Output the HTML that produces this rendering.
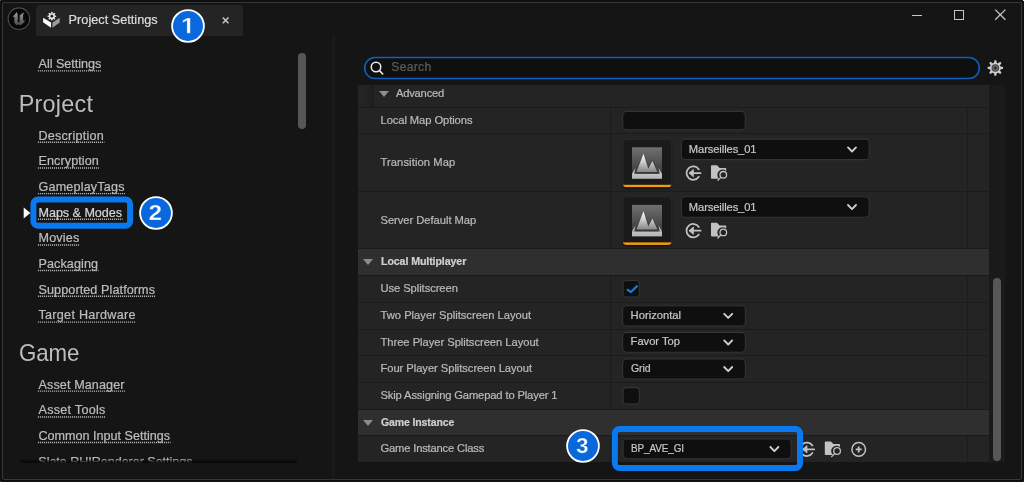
<!DOCTYPE html>
<html>
<head>
<meta charset="utf-8">
<title>Project Settings</title>
<style>
*{box-sizing:border-box;margin:0;padding:0}
html,body{width:1024px;height:482px;overflow:hidden;background:#101010;font-family:"Liberation Sans",sans-serif}
body{position:relative}
.a{position:absolute}
#win{position:absolute;left:2px;top:2px;width:1020px;height:478px;border:1px solid #363636;border-radius:2px;background:#151515}
.px{position:absolute;width:1px;height:1px}
.tx{position:absolute;white-space:nowrap;display:block;-webkit-text-stroke:0.22px currentColor}
.ul{position:absolute;height:1px;background-image:linear-gradient(90deg,#b4b4b4 50%,rgba(180,180,180,.25) 50%);background-size:2px 1px}
#txl{position:absolute;left:0;top:0;width:1024px;height:482px;will-change:transform}
#tab{position:absolute;left:36px;top:5px;width:207px;height:31px;background:#242424;border-radius:4px 4px 0 0}
.hl{position:absolute;border:6px solid #0a78ee;border-radius:8px}
.row{position:absolute;left:358px;width:631px;background:#242424}
.row.h{background:#2f2f2f}
.sep{position:absolute;left:358px;width:631px;height:1px;background:#1b1b1b}
.vl{position:absolute;width:1px;background:#1c1c1c}
.inp{position:absolute;background:#0f0f0f;border:1px solid #323232;border-radius:4px}
.thumb{position:absolute;width:49px;height:49px;background:#1a1a1a;border:1px solid #272727;border-radius:4px;box-shadow:0 1px 2px rgba(0,0,0,.55);overflow:hidden}
.thumb i{position:absolute;left:0;bottom:0;width:49px;height:2.5px;background:#f49a0c}
.tri{position:absolute;width:0;height:0;border-left:5px solid transparent;border-right:5px solid transparent;border-top:6.5px solid #8c8c8c}
</style>
</head>
<body>
<div id="win"></div>
<div class="px" style="left:0;top:0;background:#5a5a5a"></div>
<div class="px" style="left:1023px;top:0;background:#e4e4e4"></div>
<div class="px" style="left:0;top:481px;background:#4a4a4a"></div>
<div class="px" style="left:1023px;top:481px;background:#4a4030"></div>

<!-- UE logo -->
<svg class="a" style="left:7px;top:7px" width="24" height="24" viewBox="0 0 24 24">
  <defs>
  <radialGradient id="lg" cx="50%" cy="45%" r="55%"><stop offset="0" stop-color="#0e0e0e"/><stop offset="1" stop-color="#030303"/></radialGradient>
  <linearGradient id="ug" x1="0" y1="0" x2="0" y2="1"><stop offset="0" stop-color="#9c9c9c"/><stop offset="1" stop-color="#4a4a4a"/></linearGradient>
  </defs>
  <circle cx="11.9" cy="11.7" r="10.8" fill="url(#lg)" stroke="#4a4a4a" stroke-width="1.1"/>
  <path transform="translate(0.1 -0.5)" d="M5.1 10.5 C6.6 9.3 8.2 7.3 9.5 5.4 C10 6.4 10.6 7 10.6 8.4 L10.6 15.4 C11 16 12 16 12.6 15.4 L12.6 9.2 C13.4 7.6 15.4 6.4 17.4 5.9 C16.4 7 16 7.8 16 8.8 L16 13.8 C16.6 14.4 17.2 14.4 18 14 C17.4 16 15 18 13 18.7 C12.4 18.2 12 18 11.4 18 C10.6 18 10 18.2 9.2 18.7 C8.4 17.8 7.3 16.8 7.3 15.6 L7.3 11 C7.3 10.2 6.4 10.1 5.1 10.5 Z" fill="url(#ug)"/>
</svg>

<div id="tab"></div>
<!-- tab icon -->
<svg class="a" style="left:43px;top:10px" width="18" height="19" viewBox="0 -2 18 19">
  <path d="M0.1 5.7 L8.05 10.4 L8.05 15.8 L0.1 10.3 Z" fill="#ffffff"/>
  <path d="M9.45 10.4 L16.7 5.7 L16.7 10.4 L9.45 15.8 Z" fill="#9c9c9c"/>
  <circle cx="8.85" cy="4.2" r="5.3" fill="#242424"/>
  <g transform="translate(8.85 4.2)"><g fill="#e4e4e4"><path d="M-1.05 -2.6 L-0.55 -4.4 L0.55 -4.4 L1.05 -2.6 Z" transform="rotate(0)"/><path d="M-1.05 -2.6 L-0.55 -4.4 L0.55 -4.4 L1.05 -2.6 Z" transform="rotate(45)"/><path d="M-1.05 -2.6 L-0.55 -4.4 L0.55 -4.4 L1.05 -2.6 Z" transform="rotate(90)"/><path d="M-1.05 -2.6 L-0.55 -4.4 L0.55 -4.4 L1.05 -2.6 Z" transform="rotate(135)"/><path d="M-1.05 -2.6 L-0.55 -4.4 L0.55 -4.4 L1.05 -2.6 Z" transform="rotate(180)"/><path d="M-1.05 -2.6 L-0.55 -4.4 L0.55 -4.4 L1.05 -2.6 Z" transform="rotate(225)"/><path d="M-1.05 -2.6 L-0.55 -4.4 L0.55 -4.4 L1.05 -2.6 Z" transform="rotate(270)"/><path d="M-1.05 -2.6 L-0.55 -4.4 L0.55 -4.4 L1.05 -2.6 Z" transform="rotate(315)"/><circle r="3"/></g><circle r="1.35" fill="#1a1a1a"/></g>
</svg>
<!-- tab close -->
<svg class="a" style="left:221px;top:16px" width="10" height="10" viewBox="0 0 10 10"><path d="M1.8 1.5 L7.5 7.2 M7.5 1.5 L1.8 7.2" stroke="#c4c4c4" stroke-width="1.6" fill="none"/></svg>
<svg class="a" style="left:170.1px;top:7.9px" width="36" height="36" viewBox="0 0 36 36"><title>1</title><circle cx="18" cy="18" r="15.9" fill="#0968dc" stroke="#ffffff" stroke-width="1.8"/><path transform="translate(11.10 25.20) scale(0.01212 -0.01079)" d="M478 0V1170L140 959V1180L493 1409H759V0Z" fill="#ffffff" stroke="#0968dc" stroke-width="30"/></svg>

<!-- window controls -->
<svg class="a" style="left:905px;top:4px" width="110" height="24" viewBox="0 0 110 24">
  <path d="M7 11.5 H17" stroke="#c6c6c6" stroke-width="1" fill="none"/>
  <rect x="49.5" y="6.5" width="9" height="9" stroke="#c6c6c6" stroke-width="1" fill="none"/>
  <path d="M90.2 5.6 L100.4 15.8 M100.4 5.6 L90.2 15.8" stroke="#c6c6c6" stroke-width="1.3" fill="none"/>
</svg>

<!-- left panel -->
<div class="a" style="left:298px;top:53px;width:8px;height:76px;border-radius:4px;background:#575757"></div>
<div class="a" style="left:332px;top:36px;width:3px;height:443px;background:#1a1a1a"></div>

<!-- clipped last nav item -->
<div class="a" style="left:20px;top:450px;width:277px;height:12.5px;overflow:hidden;will-change:transform">
  <span class="a" style="left:18.3px;top:4px;font-size:12.6px;line-height:16px;color:#bdbdbd;white-space:nowrap;letter-spacing:-0.05px;-webkit-text-stroke:0.22px currentColor" id="clipnav">Slate RHIRenderer Settings</span>
  <div class="a" style="left:0;top:8.5px;width:277px;height:4px;background:linear-gradient(rgba(8,8,8,0),rgba(8,8,8,.6) 50%,rgba(8,8,8,.97))"></div>
</div>

<svg class="a" style="left:23px;top:207px" width="8" height="12" viewBox="0 0 8 12"><path d="M0.7 0.6 L7.4 6 L0.7 11.4 Z" fill="#ffffff"/></svg>
<svg class="a" style="left:26px;top:192px" width="112" height="42" viewBox="26 192 112 42"><rect x="33.4" y="199.5" width="96.7" height="26.3" rx="4.6" fill="none" stroke="#0a78ee" stroke-width="6"/></svg>
<svg class="a" style="left:138.4px;top:195.0px" width="36" height="36" viewBox="0 0 36 36"><title>2</title><circle cx="18" cy="18" r="15.9" fill="#0968dc" stroke="#ffffff" stroke-width="1.8"/><path transform="translate(10.56 25.00) scale(0.01187 -0.01049)" d="M71 0V195Q126 316 228 431Q329 546 483 671Q631 791 690 869Q750 947 750 1022Q750 1206 565 1206Q475 1206 428 1158Q380 1109 366 1012L83 1028Q107 1224 230 1327Q352 1430 563 1430Q791 1430 913 1326Q1035 1222 1035 1034Q1035 935 996 855Q957 775 896 708Q835 640 760 581Q686 522 616 466Q546 410 488 353Q431 296 403 231H1057V0Z" fill="#ffffff" stroke="#0968dc" stroke-width="30"/></svg>

<!-- search -->
<svg class="a" style="left:360px;top:52px" width="626" height="32" viewBox="360 52 626 32"><rect x="364.7" y="57.45" width="614.6" height="21.1" rx="10.55" fill="#0f0f0f" stroke="#0d5fc0" stroke-width="1.6"/>
<circle cx="376" cy="67" r="4.75" stroke="#ececec" stroke-width="1.5" fill="none"/><path d="M379.5 70.6 L382.7 74" stroke="#ececec" stroke-width="1.6" stroke-linecap="round"/></svg>
<!-- gear -->
<svg class="a" style="left:985px;top:58px" width="20" height="20" viewBox="-10 -10 20 20">
  <g transform="translate(0.35 -0.05)">
  <g fill="#cdcdcd"><path d="M-1.7 -4.4 L-0.85 -7.75 L0.85 -7.75 L1.7 -4.4 Z" transform="rotate(0)"/><path d="M-1.7 -4.4 L-0.85 -7.75 L0.85 -7.75 L1.7 -4.4 Z" transform="rotate(45)"/><path d="M-1.7 -4.4 L-0.85 -7.75 L0.85 -7.75 L1.7 -4.4 Z" transform="rotate(90)"/><path d="M-1.7 -4.4 L-0.85 -7.75 L0.85 -7.75 L1.7 -4.4 Z" transform="rotate(135)"/><path d="M-1.7 -4.4 L-0.85 -7.75 L0.85 -7.75 L1.7 -4.4 Z" transform="rotate(180)"/><path d="M-1.7 -4.4 L-0.85 -7.75 L0.85 -7.75 L1.7 -4.4 Z" transform="rotate(225)"/><path d="M-1.7 -4.4 L-0.85 -7.75 L0.85 -7.75 L1.7 -4.4 Z" transform="rotate(270)"/><path d="M-1.7 -4.4 L-0.85 -7.75 L0.85 -7.75 L1.7 -4.4 Z" transform="rotate(315)"/><circle r="5.2"/></g>
  <circle r="3.8" fill="#3a3a3a"/>
  <circle r="2.3" fill="none" stroke="#6e6e6e" stroke-width="1.3"/>
  <circle r="0.9" fill="#1e1e1e"/>
  </g>
</svg>

<!-- scroll track -->
<div class="a" style="left:989px;top:85px;width:16px;height:377.5px;background:#1a1a1a"></div>
<div class="a" style="left:993px;top:278px;width:8px;height:183px;border-radius:4px;background:#575757"></div>

<!-- table -->
<div class="a" style="left:358px;top:85px;width:631px;height:377px;background:#1b1b1b"></div>
<div class="row" style="top:85px;height:22px;width:16px;background:linear-gradient(90deg,#242424 0,#242424 40%,#1d1d1d 100%)"></div>
<div class="row" style="top:85px;height:22px;left:374px;width:615px"></div>
<div class="row" style="top:108px;height:25px"></div>
<div class="row" style="top:134px;height:57px"></div>
<div class="row" style="top:192px;height:56px"></div>
<div class="row h" style="top:249px;height:26px"></div>
<div class="row" style="top:276px;height:26px"></div>
<div class="row" style="top:303px;height:26px"></div>
<div class="row" style="top:330px;height:25px"></div>
<div class="row" style="top:356px;height:26px"></div>
<div class="row" style="top:383px;height:26px"></div>
<div class="row h" style="top:410px;height:25px"></div>
<div class="row" style="top:436px;height:26px"></div>
<!-- column dividers -->
<div class="vl" style="left:609.5px;top:108px;height:140px"></div>
<div class="vl" style="left:967px;top:108px;height:140px"></div>
<div class="vl" style="left:609.5px;top:276px;height:133px"></div>
<div class="vl" style="left:967px;top:276px;height:133px"></div>
<div class="vl" style="left:609.5px;top:436px;height:26px"></div>
<div class="vl" style="left:967px;top:436px;height:26px"></div>

<div class="tri" style="left:379px;top:91.3px"></div>
<div class="tri" style="left:363px;top:259.3px"></div>
<div class="tri" style="left:363px;top:419.6px"></div>

<!-- input boxes -->
<svg class="a" style="left:0;top:0" width="1024" height="482" viewBox="0 0 1024 482"><g fill="#0f0f0f" stroke="#343434" stroke-width="1.1">
<rect x="622.75" y="111.45" width="122.50" height="18.30" rx="4.0"/>
<rect x="681.35" y="139.15" width="187.80" height="20.50" rx="4.0"/>
<rect x="681.35" y="196.75" width="187.80" height="20.50" rx="4.0"/>
<rect x="623.05" y="280.45" width="16.30" height="16.60" rx="3.5"/>
<rect x="623.05" y="387.65" width="16.30" height="16.40" rx="3.5"/>
<rect x="622.65" y="305.75" width="122.70" height="20.20" rx="4.0"/>
<rect x="622.65" y="332.35" width="122.70" height="19.90" rx="4.0"/>
<rect x="622.65" y="359.05" width="122.70" height="20.00" rx="4.0"/>
<rect x="623.05" y="439.05" width="168.10" height="19.70" rx="4.0"/>
</g></svg>

<!-- asset rows -->
<svg class="a" style="left:0;top:0;pointer-events:none" width="1024" height="482" viewBox="0 0 1024 482">
  <defs><clipPath id="tc"><rect x="0" y="0" width="48.9" height="48.5" rx="4"/></clipPath>
  <filter id="ts" x="-20%" y="-20%" width="140%" height="150%"><feGaussianBlur stdDeviation="1.1"/></filter>
  <g id="thumb"><rect x="0.5" y="1.6" width="47.9" height="48" rx="4" fill="#000" opacity="0.55" filter="url(#ts)"/><rect x="0" y="0" width="48.9" height="48.5" rx="4" fill="#2b2b2b"/><rect x="0.9" y="0.9" width="47.1" height="46.7" rx="3.2" fill="#1a1a1a"/><rect x="0" y="46" width="48.9" height="2.5" fill="#f49a0c" clip-path="url(#tc)"/></g></defs>
  <use href="#thumb" x="622.8" y="138.8"/>
  <use href="#thumb" x="622.8" y="196.4"/>
</svg>


<!-- checkboxes -->
<svg class="a" style="left:622.5px;top:280px" width="18" height="18" viewBox="0 0 18 18"><path d="M4.6 9.8 L7.9 12.1 L13.9 6.2" stroke="#0f80f6" stroke-width="2.1" fill="none" stroke-linecap="round" stroke-linejoin="round"/></svg>

<!-- combo boxes -->

<!-- chevrons -->
<svg class="a" style="left:0;top:0;pointer-events:none" width="1024" height="482" viewBox="0 0 1024 482">
  <defs>
    <path id="chev" d="M-4 -2.2 L0 1.9 L4 -2.2" stroke="#cfcfcf" stroke-width="1.85" fill="none" stroke-linecap="round" stroke-linejoin="round"/>
    <g id="usesel">
      <path d="M5.6 -3.7 A6.7 6.7 0 1 0 5.6 3.7" stroke="#c2c2c2" stroke-width="1.75" fill="none" stroke-linecap="round"/>
      <path d="M-3.4 0 H7.4" stroke="#c2c2c2" stroke-width="1.8" fill="none" stroke-linecap="round"/>
      <path d="M0.2 -3.7 L-4.1 0 L0.2 3.7 Z" fill="#c2c2c2" stroke="#c2c2c2" stroke-width="0.8" stroke-linejoin="round"/>
    </g>
    <g id="browse">
      <path d="M0 0.8 Q0 0 0.8 0 L5.6 0 Q6.2 0 6.6 0.5 L8.6 2.7 L14.4 2.7 Q15.2 2.7 15.2 3.5 L15.2 5.7 A4.9 4.9 0 0 0 8.1 13.6 L0.8 13.6 Q0 13.6 0 12.8 Z" fill="#c2c2c2"/>
      <circle cx="12.3" cy="9.6" r="3.3" stroke="#c2c2c2" stroke-width="1.3" fill="none"/>
      <path d="M9.8 12.2 L6.9 15.2" stroke="#c2c2c2" stroke-width="1.3" stroke-linecap="round"/>
    </g>
    <g id="plusc">
      <circle cx="0" cy="0" r="6.8" stroke="#c2c2c2" stroke-width="1.5" fill="none"/>
      <path d="M-3 0 H3 M0 -3 V3" stroke="#c2c2c2" stroke-width="1.8" fill="none"/>
    </g>
  </defs>
  <use href="#chev" x="852" y="149.6"/>
  <use href="#chev" x="852" y="207.2"/>
  <use href="#chev" x="728.2" y="316"/>
  <use href="#chev" x="728.2" y="342.6"/>
  <use href="#chev" x="728.2" y="369.2"/>
  <use href="#chev" x="774.4" y="449.2"/>
  <use href="#usesel" x="693.2" y="173.1"/>
  <use href="#usesel" x="693.2" y="230.7"/>
  <use href="#browse" x="711" y="165.2"/>
  <use href="#browse" x="711" y="222.8"/>
  <use href="#usesel" x="806.8" y="449.3"/>
  <use href="#browse" x="824.8" y="441.4"/>
  <use href="#plusc" x="858.7" y="449.4"/>
</svg>

<!-- thumbnails art -->
<svg class="a" style="left:0;top:0;pointer-events:none" width="1024" height="482" viewBox="0 0 1024 482">
  <defs>
    <linearGradient id="sq" x1="0" y1="0" x2="0" y2="1"><stop offset="0" stop-color="#707070"/><stop offset="1" stop-color="#3a3a3a"/></linearGradient>
    <linearGradient id="mt" x1="0" y1="0" x2="0" y2="1"><stop offset="0" stop-color="#ffffff"/><stop offset="0.25" stop-color="#e8e8e8"/><stop offset="1" stop-color="#868686"/></linearGradient>
    <linearGradient id="tr" x1="0" y1="0" x2="0" y2="1"><stop offset="0" stop-color="#c4c4c4"/><stop offset="1" stop-color="#b4b4b4"/></linearGradient>
    <linearGradient id="ol" gradientUnits="userSpaceOnUse" x1="0" y1="8" x2="0" y2="25"><stop offset="0" stop-color="#444" stop-opacity="0"/><stop offset="0.6" stop-color="#3e3e3e" stop-opacity="0.7"/><stop offset="1" stop-color="#383838" stop-opacity="1"/></linearGradient>
    <g id="world">
      <rect x="0" y="0" width="30" height="26.8" fill="url(#sq)"/>
      <path d="M0 26.6 L3.4 20.6 L2.2 26.6 Z M30 26.6 L26.6 20.6 L27.8 26.6 Z" fill="#c8c8c8"/>
      <rect x="0" y="26.5" width="30" height="5" fill="url(#tr)"/>
      <path d="M4.4 25 L11.5 6.8 L16.3 21.5 L20.4 14 L25.4 25 Z" fill="none" stroke="url(#ol)" stroke-width="2.6" stroke-linejoin="round"/>
      <path d="M4.4 24.6 L11.5 6.4 L16.3 21.5 L20.4 13.7 L25.4 24.6 Z" fill="url(#mt)"/>
    </g>
  </defs>
  <use href="#world" x="632" y="147.3"/>
  <use href="#world" x="632" y="204.9"/>
</svg>

<div id="txl">
<span id="t0" class="tx" style="left:68.60px;top:12.00px;font-size:12.70px;line-height:16px;font-weight:normal;color:#dcdcdc;letter-spacing:0.016px;">Project Settings</span>
<span id="t1" class="tx nav" style="left:38.50px;top:56.00px;font-size:12.60px;line-height:16px;font-weight:normal;color:#bdbdbd;letter-spacing:-0.018px;">All Settings</span>
<span id="t2" class="tx nav" style="left:38.50px;top:128.00px;font-size:12.60px;line-height:16px;font-weight:normal;color:#bdbdbd;letter-spacing:0.230px;">Description</span>
<span id="t3" class="tx nav" style="left:38.50px;top:153.00px;font-size:12.60px;line-height:16px;font-weight:normal;color:#bdbdbd;letter-spacing:0.087px;">Encryption</span>
<span id="t4" class="tx nav" style="left:38.50px;top:179.00px;font-size:12.60px;line-height:16px;font-weight:normal;color:#bdbdbd;letter-spacing:0.182px;">GameplayTags</span>
<span id="t5" class="tx nav" style="left:38.50px;top:205.00px;font-size:12.60px;line-height:16px;font-weight:normal;color:#d6d6d6;letter-spacing:-0.045px;">Maps &amp; Modes</span>
<span id="t6" class="tx nav" style="left:38.50px;top:230.00px;font-size:12.60px;line-height:16px;font-weight:normal;color:#bdbdbd;letter-spacing:0.162px;">Movies</span>
<span id="t7" class="tx nav" style="left:38.50px;top:256.00px;font-size:12.60px;line-height:16px;font-weight:normal;color:#bdbdbd;letter-spacing:0.086px;">Packaging</span>
<span id="t8" class="tx nav" style="left:38.50px;top:282.00px;font-size:12.60px;line-height:16px;font-weight:normal;color:#bdbdbd;letter-spacing:0.094px;">Supported Platforms</span>
<span id="t9" class="tx nav" style="left:38.50px;top:307.00px;font-size:12.60px;line-height:16px;font-weight:normal;color:#bdbdbd;letter-spacing:0.279px;">Target Hardware</span>
<span id="t10" class="tx nav" style="left:38.50px;top:377.00px;font-size:12.60px;line-height:16px;font-weight:normal;color:#bdbdbd;letter-spacing:0.108px;">Asset Manager</span>
<span id="t11" class="tx nav" style="left:38.50px;top:402.00px;font-size:12.60px;line-height:16px;font-weight:normal;color:#bdbdbd;letter-spacing:0.263px;">Asset Tools</span>
<span id="t12" class="tx nav" style="left:38.50px;top:428.00px;font-size:12.60px;line-height:16px;font-weight:normal;color:#bdbdbd;letter-spacing:-0.005px;">Common Input Settings</span>
<span id="t13" class="tx" style="left:18.80px;top:89.00px;font-size:23.40px;line-height:30px;font-weight:normal;color:#bdbdbd;letter-spacing:0.215px;-webkit-text-stroke:0;">Project</span>
<span id="t14" class="tx" style="left:18.90px;top:338.00px;font-size:23.40px;line-height:30px;font-weight:normal;color:#bdbdbd;letter-spacing:-0.120px;-webkit-text-stroke:0;transform:scaleX(0.9520);transform-origin:0 50%;">Game</span>
<span id="t15" class="tx" style="left:391.30px;top:59.00px;font-size:12.20px;line-height:16px;font-weight:normal;color:#5c5c5c;letter-spacing:0.255px;">Search</span>
<span id="t16" class="tx" style="left:395.90px;top:85.00px;font-size:11.20px;line-height:16px;font-weight:normal;color:#b9b9b9;letter-spacing:-0.195px;">Advanced</span>
<span id="t17" class="tx" style="left:380.50px;top:112.00px;font-size:11.20px;line-height:16px;font-weight:normal;color:#b9b9b9;letter-spacing:-0.080px;">Local Map Options</span>
<span id="t18" class="tx" style="left:380.50px;top:154.00px;font-size:11.20px;line-height:16px;font-weight:normal;color:#b9b9b9;letter-spacing:0.086px;">Transition Map</span>
<span id="t19" class="tx" style="left:380.50px;top:212.00px;font-size:11.20px;line-height:16px;font-weight:normal;color:#b9b9b9;letter-spacing:-0.035px;">Server Default Map</span>
<span id="t20" class="tx" style="left:380.50px;top:253.00px;font-size:11.20px;line-height:16px;font-weight:bold;color:#d0d0d0;letter-spacing:-0.120px;transform:scaleX(0.9534);transform-origin:0 50%;">Local Multiplayer</span>
<span id="t21" class="tx" style="left:380.50px;top:280.00px;font-size:11.20px;line-height:16px;font-weight:normal;color:#b9b9b9;letter-spacing:-0.069px;">Use Splitscreen</span>
<span id="t22" class="tx" style="left:380.50px;top:307.00px;font-size:11.20px;line-height:16px;font-weight:normal;color:#b9b9b9;letter-spacing:0.004px;">Two Player Splitscreen Layout</span>
<span id="t23" class="tx" style="left:380.50px;top:334.00px;font-size:11.20px;line-height:16px;font-weight:normal;color:#b9b9b9;letter-spacing:-0.033px;">Three Player Splitscreen Layout</span>
<span id="t24" class="tx" style="left:380.50px;top:360.00px;font-size:11.20px;line-height:16px;font-weight:normal;color:#b9b9b9;letter-spacing:-0.051px;">Four Player Splitscreen Layout</span>
<span id="t25" class="tx" style="left:380.50px;top:387.00px;font-size:11.20px;line-height:16px;font-weight:normal;color:#b9b9b9;letter-spacing:-0.139px;">Skip Assigning Gamepad to Player 1</span>
<span id="t26" class="tx" style="left:380.50px;top:414.00px;font-size:11.20px;line-height:16px;font-weight:bold;color:#d0d0d0;letter-spacing:-0.120px;transform:scaleX(0.9379);transform-origin:0 50%;">Game Instance</span>
<span id="t27" class="tx" style="left:380.50px;top:440.00px;font-size:11.20px;line-height:16px;font-weight:normal;color:#b9b9b9;letter-spacing:-0.175px;">Game Instance Class</span>
<span id="t28" class="tx" style="left:688.80px;top:141.00px;font-size:11.20px;line-height:16px;font-weight:normal;color:#c6c6c6;letter-spacing:-0.103px;">Marseilles_01</span>
<span id="t29" class="tx" style="left:688.80px;top:199.00px;font-size:11.20px;line-height:16px;font-weight:normal;color:#c6c6c6;letter-spacing:-0.103px;">Marseilles_01</span>
<span id="t30" class="tx" style="left:630.60px;top:307.00px;font-size:11.20px;line-height:16px;font-weight:normal;color:#c6c6c6;letter-spacing:0.014px;">Horizontal</span>
<span id="t31" class="tx" style="left:630.60px;top:333.00px;font-size:11.20px;line-height:16px;font-weight:normal;color:#c6c6c6;letter-spacing:-0.031px;">Favor Top</span>
<span id="t32" class="tx" style="left:630.60px;top:360.00px;font-size:11.20px;line-height:16px;font-weight:normal;color:#c6c6c6;letter-spacing:-0.120px;transform:scaleX(0.9384);transform-origin:0 50%;">Grid</span>
<span id="t33" class="tx" style="left:630.60px;top:440.00px;font-size:11.20px;line-height:16px;font-weight:normal;color:#c6c6c6;letter-spacing:-0.120px;transform:scaleX(0.8867);transform-origin:0 50%;">BP_AVE_GI</span>
<svg class="a" style="left:0;top:0" width="340" height="482" viewBox="0 0 340 482"><g stroke="#b0b0b0" stroke-width="1.35" stroke-dasharray="1.15 0.85" fill="none"><path d="M37.9 70.85 h64.0"/><path d="M37.9 142.25 h66.5"/><path d="M37.9 167.95 h61.5"/><path d="M37.9 193.65 h87.2"/><path d="M37.9 219.25 h84.7"/><path d="M37.9 244.95 h41.9"/><path d="M37.9 270.45 h60.7"/><path d="M37.9 296.25 h117.7"/><path d="M37.9 322.05 h98.2"/><path d="M37.9 391.15 h87.2"/><path d="M37.9 416.95 h68.0"/><path d="M37.9 442.45 h132.7"/></g></svg>
</div>

<!-- highlight 3 -->
<svg class="a" style="left:606px;top:420px" width="204" height="58" viewBox="606 420 204 58"><rect x="614.9" y="428.9" width="185.1" height="39.2" rx="4.6" fill="none" stroke="#0a78ee" stroke-width="6"/></svg>
<svg class="a" style="left:565.1px;top:428.4px" width="36" height="36" viewBox="0 0 36 36"><title>3</title><circle cx="18" cy="18" r="15.9" fill="#0968dc" stroke="#ffffff" stroke-width="1.8"/><path transform="translate(11.09 24.90) scale(0.01090 -0.01039)" d="M1065 391Q1065 193 935 85Q805 -23 565 -23Q338 -23 204 82Q70 186 47 383L333 408Q360 205 564 205Q665 205 721 255Q777 305 777 408Q777 502 709 552Q641 602 507 602H409V829H501Q622 829 683 878Q744 928 744 1020Q744 1107 696 1156Q647 1206 554 1206Q467 1206 414 1158Q360 1110 352 1022L71 1042Q93 1224 222 1327Q351 1430 559 1430Q780 1430 904 1330Q1029 1231 1029 1055Q1029 923 952 838Q874 753 728 725V721Q890 702 978 614Q1065 527 1065 391Z" fill="#ffffff" stroke="#0968dc" stroke-width="30"/></svg>
</body>
</html>
